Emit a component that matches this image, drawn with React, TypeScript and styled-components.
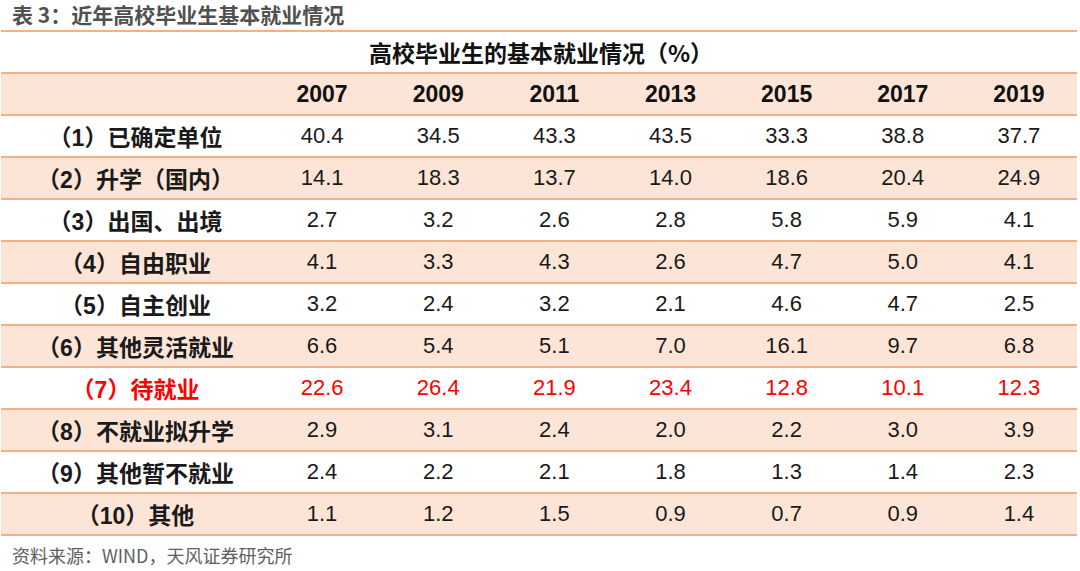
import styled, { createGlobalStyle } from "styled-components";

const GlobalStyle = createGlobalStyle`
  body {
    margin: 0;
    background: #ffffff;
  }
`;

const years = ["2007", "2009", "2011", "2013", "2015", "2017", "2019"];

const rows: { label: string; values: string[]; alert?: boolean }[] = [
  { label: "（1）已确定单位", values: ["40.4", "34.5", "43.3", "43.5", "33.3", "38.8", "37.7"] },
  { label: "（2）升学（国内）", values: ["14.1", "18.3", "13.7", "14.0", "18.6", "20.4", "24.9"] },
  { label: "（3）出国、出境", values: ["2.7", "3.2", "2.6", "2.8", "5.8", "5.9", "4.1"] },
  { label: "（4）自由职业", values: ["4.1", "3.3", "4.3", "2.6", "4.7", "5.0", "4.1"] },
  { label: "（5）自主创业", values: ["3.2", "2.4", "3.2", "2.1", "4.6", "4.7", "2.5"] },
  { label: "（6）其他灵活就业", values: ["6.6", "5.4", "5.1", "7.0", "16.1", "9.7", "6.8"] },
  { label: "（7）待就业", values: ["22.6", "26.4", "21.9", "23.4", "12.8", "10.1", "12.3"], alert: true },
  { label: "（8）不就业拟升学", values: ["2.9", "3.1", "2.4", "2.0", "2.2", "3.0", "3.9"] },
  { label: "（9）其他暂不就业", values: ["2.4", "2.2", "2.1", "1.8", "1.3", "1.4", "2.3"] },
  { label: "（10）其他", values: ["1.1", "1.2", "1.5", "0.9", "0.7", "0.9", "1.4"] },
];

const App = () => {
  return (
    <>
      <GlobalStyle />
      <Page>
        <Title>表 3：近年高校毕业生基本就业情况</Title>
        <Table>
          <Caption>高校毕业生的基本就业情况（%）</Caption>
          <Row $shaded>
            <LabelCell />
            {years.map((y) => (
              <YearCell key={y}>{y}</YearCell>
            ))}
          </Row>
          {rows.map((r, i) => (
            <Row key={r.label} $shaded={i % 2 === 1} $alert={r.alert}>
              <LabelCell>{r.label}</LabelCell>
              {r.values.map((v, j) => (
                <ValueCell key={j}>{v}</ValueCell>
              ))}
            </Row>
          ))}
        </Table>
        <Source>资料来源：WIND，天风证券研究所</Source>
      </Page>
    </>
  );
};

export default App;

const Page = styled.div`
  width: 1080px;
  height: 571px;
  overflow: hidden;
  font-family: "Liberation Sans", "Noto Sans CJK SC", sans-serif;
`;

const Title = styled.div`
  height: 30px;
  padding-left: 12px;
  line-height: 28px;
  font-family: "Noto Sans CJK SC", sans-serif;
  font-size: 21px;
  font-weight: 700;
  color: #505050;
`;

const Table = styled.div`
  margin: 0 3px 0 1px;
  border-top: 2px solid #f4b183;
`;

const Caption = styled.div`
  height: 40px;
  border-bottom: 2px solid #f4b183;
  display: flex;
  align-items: center;
  justify-content: center;
  font-family: "Noto Sans CJK SC", sans-serif;
  font-size: 23px;
  font-weight: 700;
  color: #111111;
  padding-left: 4px;
`;

const Row = styled.div<{ $shaded?: boolean; $alert?: boolean }>`
  display: grid;
  grid-template-columns: 263px repeat(7, 1fr);
  height: 40px;
  align-items: center;
  border-bottom: 2px solid #f4b183;
  background: ${(p) => (p.$shaded ? "#fce4d6" : "#ffffff")};
  color: ${(p) => (p.$alert ? "#ff0000" : "#1a1a1a")};
`;

const LabelCell = styled.div`
  text-align: center;
  font-family: "Liberation Sans", "Noto Sans CJK SC", sans-serif;
  font-size: 23px;
  font-weight: 700;
  padding-left: 6px;
`;

const YearCell = styled.div`
  text-align: center;
  font-size: 23px;
  font-weight: 700;
  color: #111111;
`;

const ValueCell = styled.div`
  text-align: center;
  font-size: 22px;
`;

const Source = styled.div`
  padding: 6px 0 0 12px;
  font-family: "Noto Sans CJK SC", sans-serif;
  font-size: 18px;
  color: #606060;
`;
